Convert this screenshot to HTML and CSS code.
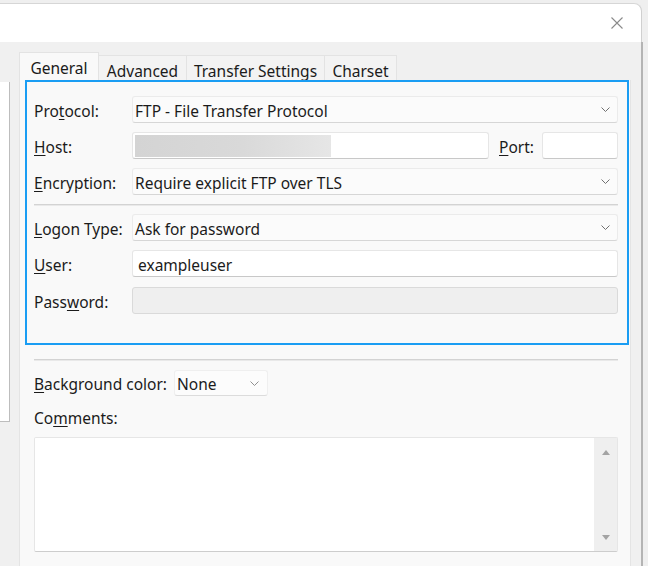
FILE: index.html
```html
<!DOCTYPE html>
<html>
<head>
<meta charset="utf-8">
<link rel="stylesheet" href="styles.css">
</head>
<body>
<div class="window">
  <div class="titlebar">
    <svg class="close" width="12" height="12" viewBox="0 0 12 12"><path d="M0.5 0.5 L11.5 11.5 M11.5 0.5 L0.5 11.5" stroke="#8a8a8a" stroke-width="1.1" fill="none"/></svg>
  </div>
  <div class="body">
    <div class="sitelist"></div>
    <div class="tabs">
      <div class="tabstrip">
        <div class="tab active w-general">General</div>
        <div class="tab w-advanced">Advanced</div>
        <div class="tab w-transfer">Transfer Settings</div>
        <div class="tab w-charset">Charset</div>
      </div>
      <div class="panel">
        <div class="focus">
          <div class="row">
            <div class="label">Pro<u>t</u>ocol:</div>
            <div class="combo"><span class="val">FTP - File Transfer Protocol</span><svg class="chev" width="9" height="5" viewBox="0 0 9 5"><polyline points="0.5,0.5 4.5,4.5 8.5,0.5" fill="none" stroke="#707070" stroke-width="1"/></svg></div>
          </div>
          <div class="row">
            <div class="label"><u>H</u>ost:</div>
            <div class="input host"><div class="blurred"></div></div>
            <div class="label port-label"><u>P</u>ort:</div>
            <div class="input port"></div>
          </div>
          <div class="row">
            <div class="label"><u>E</u>ncryption:</div>
            <div class="combo"><span class="val">Require explicit FTP over TLS</span><svg class="chev" width="9" height="5" viewBox="0 0 9 5"><polyline points="0.5,0.5 4.5,4.5 8.5,0.5" fill="none" stroke="#707070" stroke-width="1"/></svg></div>
          </div>
          <div class="sep inner-sep"></div>
          <div class="row">
            <div class="label"><u>L</u>ogon Type:</div>
            <div class="combo"><span class="val">Ask for password</span><svg class="chev" width="9" height="5" viewBox="0 0 9 5"><polyline points="0.5,0.5 4.5,4.5 8.5,0.5" fill="none" stroke="#707070" stroke-width="1"/></svg></div>
          </div>
          <div class="row">
            <div class="label"><u>U</u>ser:</div>
            <div class="input"><span class="val inval">exampleuser</span></div>
          </div>
          <div class="row pw-row">
            <div class="label">Pass<u>w</u>ord:</div>
            <div class="input disabled"></div>
          </div>
        </div>
        <div class="rest">
          <div class="sep outer-sep"></div>
          <div class="bgrow">
            <div class="label bglabel"><u>B</u>ackground color:</div>
            <div class="combo small"><span class="val">None</span><svg class="chev" width="9" height="5" viewBox="0 0 9 5"><polyline points="0.5,0.5 4.5,4.5 8.5,0.5" fill="none" stroke="#909090" stroke-width="1"/></svg></div>
          </div>
          <div class="label comments">Co<u>m</u>ments:</div>
          <div class="textarea">
            <div class="textbody"></div>
            <div class="vscroll">
              <svg width="8" height="5" viewBox="0 0 8 5"><polygon points="0,5 4,0 8,5" fill="#a3a3a3"/></svg>
              <svg width="8" height="5" viewBox="0 0 8 5"><polygon points="0,0 8,0 4,5" fill="#a3a3a3"/></svg>
            </div>
          </div>
        </div>
      </div>
    </div>
  </div>
</div>
</body>
</html>
```

FILE: styles.css
```css
* { box-sizing: border-box; }
html, body { margin: 0; padding: 0; }
body {
  width: 648px;
  height: 566px;
  overflow: hidden;
  background: #efefef;
  font-family: "Noto Sans", "Open Sans", sans-serif;
  font-size: 15.5px;
  color: #1b1b1b;
}
u { text-decoration: underline; text-underline-offset: 2px; text-decoration-thickness: 1px; }

.window { margin-top: 3px; width: 643px; }
.titlebar {
  width: 642px;
  height: 39px;
  background: #fff;
  border-top: 1px solid #d6d6d6;
  border-right: 1px solid #d0d0d0;
  border-top-right-radius: 8px;
  display: flex;
  align-items: center;
  justify-content: flex-end;
  padding-right: 18px;
}
.close { display: block; }

.body {
  width: 643px;
  height: 524px;
  background: #f0f0f0;
  border-right: 2px solid #b4b4b4;
  display: flex;
}
.sitelist {
  flex: none;
  width: 10px;
  height: 340px;
  margin-top: 40px;
  background: #fff;
  border-right: 1px solid #bdbdbd;
  border-bottom: 1px solid #bdbdbd;
}
.tabs {
  flex: none;
  margin-left: 9px;
  width: 612px;
  display: flex;
  flex-direction: column;
}
.tabstrip {
  display: flex;
  align-items: flex-end;
  height: 38px;
  padding-top: 10px;
}
.tab {
  height: 25px;
  padding-top: 6px;
  line-height: 18px;
  text-align: center;
  background: #f3f3f3;
  border: 1px solid #e3e3e3;
  border-bottom: none;
  margin-left: -1px;
  white-space: nowrap;
}
.tab.active { height: 28px; background: #f9f9f9; margin-left: 0; position: relative; z-index: 1; }
.w-general { width: 80px; }
.w-advanced { width: 89px; }
.w-transfer { width: 139px; }
.w-charset { width: 73px; }

.panel {
  flex: 1;
  background: #f9f9f9;
  border-left: 1px solid #e4e4e4;
  border-right: 1px solid #e4e4e4;
}
.focus {
  margin-left: 5px;
  width: 604px;
  height: 265px;
  border: 2px solid #1a9df3;
  padding: 14px 9px 0 7px;
}
.row {
  display: flex;
  align-items: center;
  height: 27px;
}
.row + .row { margin-top: 9px; }
.row.pw-row { margin-top: 10px; }
.label {
  flex: none;
  width: 98px;
  line-height: 20px;
  margin-top: 2px;
  white-space: nowrap;
}
.val { line-height: 20px; margin-top: 2px; white-space: nowrap; }
.combo {
  flex: 1;
  height: 27px;
  display: flex;
  align-items: center;
  background: #fbfbfb;
  border: 1px solid #ebebeb;
  border-bottom-color: #d6d6d6;
  border-radius: 3px;
  padding: 0 7px 0 2px;
}
.chev { margin-left: auto; display: block; }
.input {
  flex: 1;
  height: 27px;
  display: flex;
  align-items: center;
  background: #fff;
  border: 1px solid #e6e6e6;
  border-bottom-color: #c8c8c8;
  border-radius: 3px;
  padding: 0 2px;
}
.inval { padding-left: 3px; }
.host { flex: none; width: 357px; }
.blurred {
  width: 196px;
  height: 22px;
  background: linear-gradient(90deg, #d4d4d4 0%, #d9d9d9 55%, #e6e6e6 100%);
}
.port-label { width: 43px; margin-left: 10px; }
.port { flex: none; width: 76px; }
.disabled { background: #efefef; border-color: #dadada; }

.sep {
  height: 2px;
  border-top: 1px solid #d3d3d3;
  border-bottom: 1px solid #e9e9e9;
}
.inner-sep { margin: 9px 0 8px 0; }

.rest { padding: 0 12px 0 14px; }
.outer-sep { margin-top: 14px; }
.bgrow {
  display: flex;
  align-items: center;
  height: 26px;
  margin-top: 9px;
}
.bglabel { width: 140px; }
.combo.small { flex: none; width: 94px; height: 26px; padding: 0 8px 0 2px; background: #fcfcfc; border-color: #efefef; border-bottom-color: #dcdcdc; }
.comments { margin-top: 12px; width: auto; }
.textarea {
  margin-top: 9px;
  height: 115px;
  display: flex;
  background: #fff;
  border: 1px solid #e6e6e6;
  border-bottom-color: #cdcdcd;
  border-radius: 2px;
}
.textbody { flex: 1; }
.vscroll {
  width: 23px;
  background: #efefef;
  display: flex;
  flex-direction: column;
  align-items: center;
  justify-content: space-between;
  padding: 12px 0 11px 0;
}
.vscroll svg { display: block; }
```
